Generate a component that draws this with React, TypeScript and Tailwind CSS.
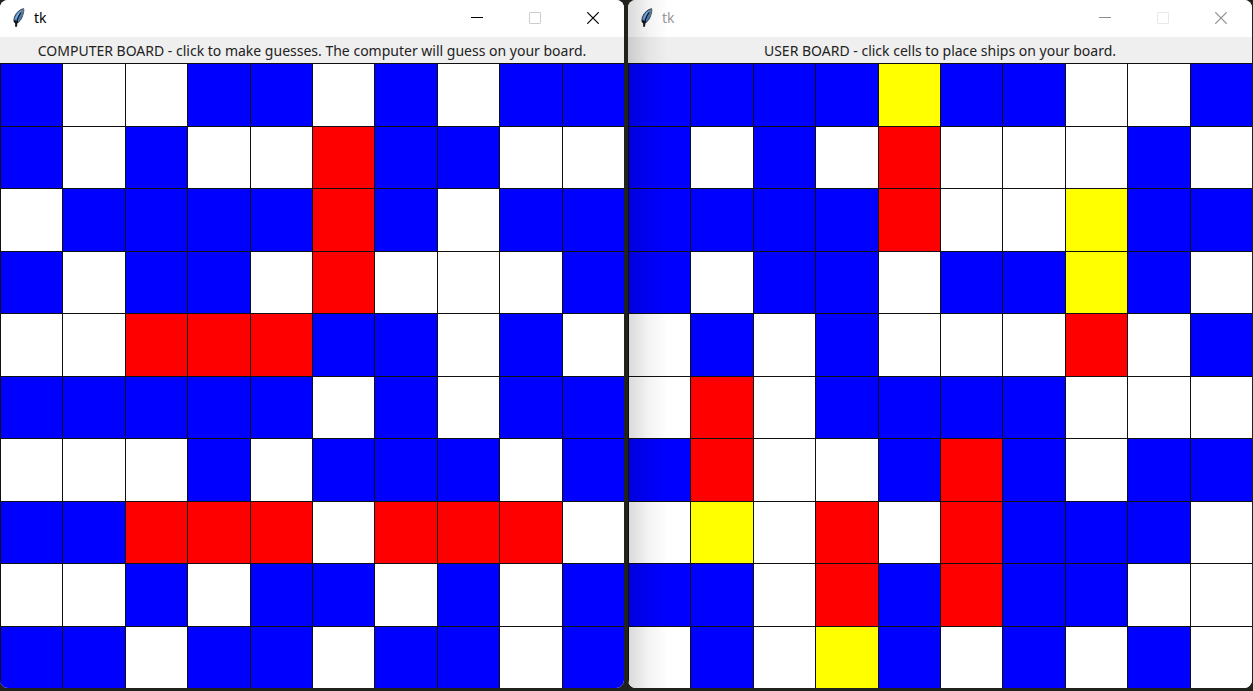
import clsx from "clsx";

type Board = {
  id: string;
  active: boolean;
  message: string;
  rows: string[];
};

const boards: Board[] = [
  {
    id: "computer",
    active: true,
    message: "COMPUTER BOARD - click to make guesses. The computer will guess on your board.",
    rows: [
      "BWWBBWBWBB",
      "BWBWWRBBWW",
      "WBBBBRBWBB",
      "BWBBWRWWWB",
      "WWRRRBBWBW",
      "BBBBBWBWBB",
      "WWWBWBBBWB",
      "BBRRRWRRRW",
      "WWBWBBWBWB",
      "BBWBBWBBWB",
    ],
  },
  {
    id: "user",
    active: false,
    message: "USER BOARD - click cells to place ships on your board.",
    rows: [
      "BBBBYBBWWB",
      "BWBWRWWWBW",
      "BBBBRWWYBB",
      "BWBBWBBYBW",
      "WBWBWWWRWB",
      "WRWBBBBWWW",
      "BRWWBRBWBB",
      "WYWRWRBBBW",
      "BBWRBRBBWW",
      "WBWYBWBWBW",
    ],
  },
];

const cellColors: Record<string, string> = {
  B: "bg-[#0000ff]",
  W: "bg-white",
  R: "bg-[#ff0000]",
  Y: "bg-[#ffff00]",
};

function Feather() {
  return (
    <svg width="14" height="20" viewBox="0 0 14 20" aria-hidden="true">
      <path
        d="M11.600.7C8 1.300 4.600 4.300 2.800 8.200c-.9 2-1.100 4.200-.6 6.100l1.300.5.2 3.700.8 0 .6-3.700c2-.8 4-3 5.100-6 1.100-2.800 2-6 1.400-8.100Z"
        fill="#4680c2"
        stroke="#3b3f46"
        strokeWidth="1"
      />
      <path d="M10.600 1.800C7.500 3 4.700 6 3.600 9.600c-.4 1.400-.5 2.600-.3 3.700C4.700 9.500 7.500 5 10.600 1.800Z" fill="#86aedb" />
      <path d="M11.500 1C11.500 3.500 10.800 6 9.800 8.200" fill="none" stroke="#77736c" strokeWidth="1.200" />
      <path d="M9 4.500C6.500 8 4.800 12 4 18.500" fill="none" stroke="#10151c" strokeWidth="1.200" />
      <path d="M2.500 12.200 4 14.800l2-1.200" fill="none" stroke="#10151c" strokeWidth="1.800" />
    </svg>
  );
}

function TitleBar({ active }: { active: boolean }) {
  const control = "flex h-full w-[58px] items-center justify-center";
  return (
    <header className="flex h-[37px] items-start bg-white pl-3">
      <div className="flex h-[35px] flex-1 items-center gap-2">
        <Feather />
        <h1 className={clsx("text-sm font-normal", active ? "text-black" : "text-[#999999]")}>tk</h1>
      </div>
      <div className={clsx("flex h-9 pr-0.5", active ? "text-black" : "text-[#8c8c8c]")}>
        <button type="button" aria-label="Minimize" className={control}>
          <svg width="12" height="12" viewBox="0 0 12 12" shapeRendering="crispEdges">
            <path d="M0 5.500h12" stroke="currentColor" />
          </svg>
        </button>
        <button
          type="button"
          aria-label="Maximize"
          disabled
          className={clsx(control, active ? "text-[#cccccc]" : "text-[#e8e8e8]")}
        >
          <svg width="12" height="12" viewBox="0 0 12 12">
            <rect x=".5" y=".5" width="11" height="11" rx=".6" fill="none" stroke="currentColor" />
          </svg>
        </button>
        <button type="button" aria-label="Close" className={control}>
          <svg width="12" height="12" viewBox="0 0 12 12">
            <path d="M.3.3l11.400 11.400M11.700.3.3 11.700" stroke="currentColor" strokeWidth="1.200" />
          </svg>
        </button>
      </div>
    </header>
  );
}

function BoardWindow({ board }: { board: Board }) {
  return (
    <section className="relative flex min-w-0 flex-1 flex-col overflow-hidden rounded-lg bg-white">
      <TitleBar active={board.active} />
      <p className="flex h-[26px] items-center justify-center bg-[#efefef] pt-0.5 text-sm whitespace-nowrap text-[#222222]">
        {board.message}
      </p>
      <div className="grid flex-1 grid-cols-10 grid-rows-10">
        {board.rows.flatMap((row, r) =>
          row.split("").map((cell, c) => (
            <button
              key={`${r}-${c}`}
              type="button"
              aria-label={`Row ${r + 1}, column ${c + 1}`}
              className={clsx("min-h-6 border-t border-l border-[#101010]", cellColors[cell])}
            />
          )),
        )}
      </div>
      {!board.active && (
        <div className="pointer-events-none absolute inset-y-0 left-0 w-10 bg-linear-to-r from-black/15 via-black/5 to-transparent" />
      )}
    </section>
  );
}

export default function App() {
  return (
    <main className="flex min-h-screen gap-1 bg-[#22221c] pr-px pb-[3px] font-['Noto_Sans','Open_Sans',sans-serif]">
      {boards.map((board) => (
        <BoardWindow key={board.id} board={board} />
      ))}
    </main>
  );
}
